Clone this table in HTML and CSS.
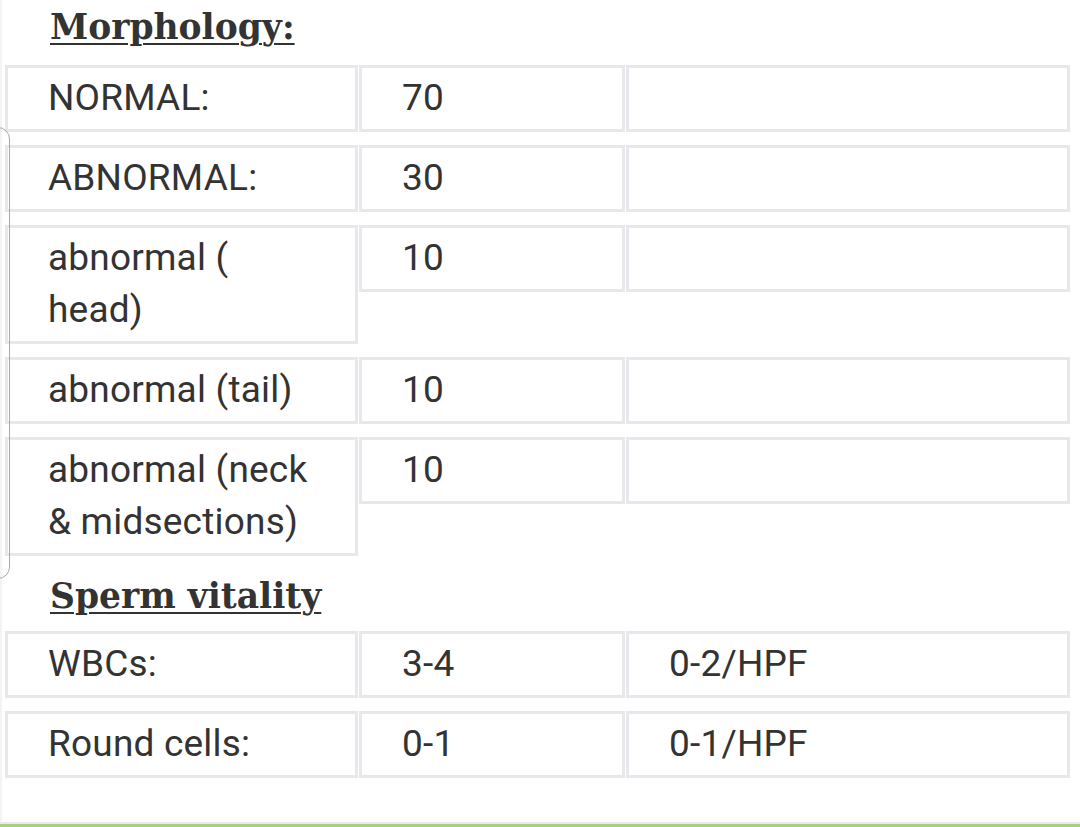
FILE: index.html
```html
<!DOCTYPE html>
<html lang="en">
<head>
<meta charset="utf-8">
<title>Semen analysis</title>
<link rel="stylesheet" href="styles.css">
</head>
<body>
<div class="page">
  <div class="bracket"></div>
  <h3 class="section-title first">Morphology:</h3>
  <div class="table">
    <div class="row"><div class="cell c1">NORMAL:</div><div class="cell c2">70</div><div class="cell c3"></div></div>
    <div class="row"><div class="cell c1">ABNORMAL:</div><div class="cell c2">30</div><div class="cell c3"></div></div>
    <div class="row"><div class="cell c1">abnormal ( head)</div><div class="cell c2">10</div><div class="cell c3"></div></div>
    <div class="row"><div class="cell c1">abnormal (tail)</div><div class="cell c2">10</div><div class="cell c3"></div></div>
    <div class="row"><div class="cell c1">abnormal (neck &amp; midsections)</div><div class="cell c2">10</div><div class="cell c3"></div></div>
  </div>
  <h3 class="section-title second">Sperm vitality</h3>
  <div class="table">
    <div class="row"><div class="cell c1">WBCs:</div><div class="cell c2">3-4</div><div class="cell c3">0-2/HPF</div></div>
    <div class="row"><div class="cell c1">Round cells:</div><div class="cell c2">0-1</div><div class="cell c3">0-1/HPF</div></div>
  </div>
  <div class="footer-bar"></div>
</div>
</body>
</html>
```

FILE: styles.css
```css
html, body {
  margin: 0;
  padding: 0;
  background: #ffffff;
}

body {
  font-family: Roboto, "Liberation Sans", sans-serif;
  color: #333333;
  overflow: hidden;
}

.page {
  position: relative;
  width: 1080px;
  height: 827px;
  box-shadow: inset 2px 0 0 #f4f4f4;
  display: flex;
  flex-direction: column;
}

.bracket {
  position: absolute;
  left: -90px;
  top: 127px;
  width: 100px;
  height: 452px;
  border: 1px solid #a9a9a9;
  border-radius: 12px;
  box-sizing: border-box;
}

.section-title {
  font-family: "DejaVu Serif", "Liberation Serif", serif;
  font-weight: bold;
  font-size: 34.5px;
  line-height: 44px;
  color: #333333;
  text-decoration: underline;
  text-decoration-thickness: 2px;
  text-underline-offset: 4px;
  margin: 0 0 0 50px;
}

.section-title.first {
  padding-top: 5px;
  margin-bottom: 16px;
}

.section-title.second {
  margin-top: 18px;
  margin-bottom: 13px;
}

.table {
  display: flex;
  flex-direction: column;
  gap: 13px;
  padding-left: 5px;
}

.row {
  display: flex;
  align-items: flex-start;
  gap: 1px;
}

.cell {
  box-sizing: border-box;
  border: 3px solid #e6e8ec;
  padding: 4px 36px 5px 40px;
  font-size: 37px;
  letter-spacing: 0.2px;
  line-height: 52px;
  min-height: 67px;
}

.c1 { width: 353px; }
.c2 { width: 266px; }
.c3 { width: 444px; }

.footer-bar {
  margin-top: auto;
  height: 5px;
  border-top: 2px solid #e7ebe3;
  background: #a8d17f;
  box-sizing: border-box;
}
```
